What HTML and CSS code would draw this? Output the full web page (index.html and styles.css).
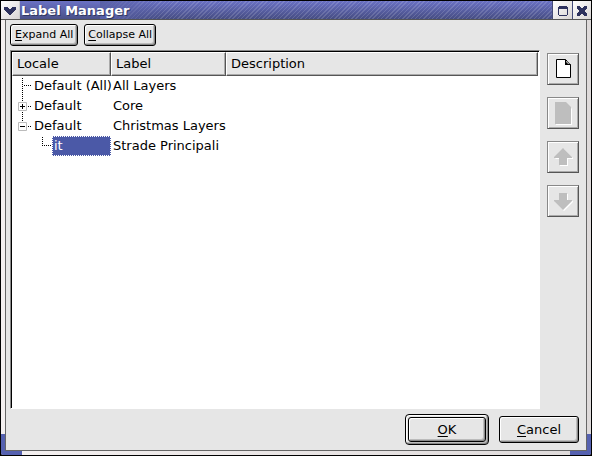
FILE: index.html
```html
<!DOCTYPE html>
<html lang="en">
<head>
<meta charset="utf-8">
<title>Label Manager</title>
<link rel="stylesheet" href="styles.css">
</head>
<body>
<main class="window">
  <header class="titlebar">
    <button class="cap" aria-label="Window menu"><svg width="14" height="14" viewBox="0 0 14 14"><path d="M1 3h4v1h1v1h2V4h1V3h4v3h-1v1h-1v1h-1v1H9v1H8v1H6v-1H5V9H4V8H3V7H2V6H1z"/></svg></button>
    <h1>Label Manager</h1>
    <button class="cap" aria-label="Maximize"><svg width="12" height="12" viewBox="0 0 12 12"><path fill-rule="evenodd" d="M2 1h8v1h1v8h-1v1H2v-1H1V2h1zM2 4v6h8V4z"/></svg></button>
    <button class="cap" aria-label="Close"><svg width="12" height="12" viewBox="0 0 12 12"><path d="M1 1h3v1h1v1h2V2h1V1h3v3h-1v1H9v2h1v1h1v3H8v-1H7V9H5v1H4v1H1V8h1V7h1V5H2V4H1z"/></svg></button>
  </header>
  <div class="content">
    <div class="toolbar">
      <button class="btn small"><span><u>E</u>xpand All</span></button>
      <button class="btn small"><span><u>C</u>ollapse All</span></button>
    </div>
    <div class="middle">
      <div class="list">
        <table>
          <colgroup><col class="c-locale"><col class="c-label"><col></colgroup>
          <thead><tr><th scope="col">Locale</th><th scope="col">Label</th><th scope="col">Description</th></tr></thead>
          <tbody>
            <tr><td><div class="node"><svg width="20" height="20"><path class="dots" d="M10.500 2V20M12 9.500H20"/></svg><span>Default (All)</span></div></td><td>All Layers</td><td></td></tr>
            <tr><td><div class="node"><svg width="20" height="20"><path class="dots" d="M10.500 0V20M16 10.500H20"/><path class="box" d="M6.500 6.500h8v8h-8z"/><path class="sign" d="M8 10.500h5M10.500 8v5"/></svg><span>Default</span></div></td><td>Core</td><td></td></tr>
            <tr><td><div class="node"><svg width="20" height="20"><path class="dots" d="M10.500 0V6M16 10.500H20"/><path class="box" d="M6.500 6.500h8v8h-8z"/><path class="sign" d="M8 10.500h5"/></svg><span>Default</span></div></td><td>Christmas Layers</td><td></td></tr>
            <tr><td><div class="node"><svg width="40" height="20"><path class="dots" d="M30.500 1V10M32 9.500H40"/></svg><span class="selected">it</span></div></td><td>Strade Principali</td><td></td></tr>
          </tbody>
        </table>
      </div>
      <div class="tools">
        <button class="tool" aria-label="New"><svg width="24" height="24" viewBox="0 0 24 24"><path fill="#fff" stroke="#000" d="M5.500 2.500h9l5 5v13h-14z"/><path d="M14 2l6 6h-6z"/><path fill="#aaa" d="M15 4h1l3 3h-2l-2-2z"/></svg></button>
        <button class="tool" aria-label="Copy" disabled><svg width="24" height="24" viewBox="0 0 24 24"><path fill="#fff" d="M5 3h11l5 5v16H5z"/><path fill="#bebebe" d="M4 1h11l5 5v17H4z"/></svg></button>
        <button class="tool" aria-label="Move up" disabled><svg width="24" height="24" viewBox="0 0 24 24"><path fill="#fff" d="M13 4l9 9v1h-5v7H9v-7H4z"/><path fill="#bebebe" d="M12 3l9 9v1h-5v7H8v-7H3v-1z"/></svg></button>
        <button class="tool" aria-label="Move down" disabled><svg width="24" height="24" viewBox="0 0 24 24"><path fill="#fff" d="M9 5h8v7h5v1l-9 9-9-9h5z"/><path fill="#bebebe" d="M8 4h8v7h5v1l-9 9-9-9v-1h5z"/></svg></button>
      </div>
    </div>
    <footer class="actions">
      <div class="default-ring"><button class="btn large"><span><u>O</u>K</span></button></div>
      <button class="btn large"><span><u>C</u>ancel</span></button>
    </footer>
  </div>
  <i class="corner left"></i><i class="corner right"></i>
</main>
</body>
</html>
```
FILE: styles.css
```css
* { box-sizing: border-box; }
body { margin: 0; background: #000; color: #000; font: 13px/20px "DejaVu Sans", sans-serif; }
button { font: inherit; color: inherit; margin: 0; padding: 0; }
svg { display: block; flex: none; }
u { text-underline-offset: 2px; text-decoration-thickness: 1px; }
.window { position: relative; min-height: 100vh; display: flex; flex-direction: column; border: 1px solid #000; border-radius: 3px; background: linear-gradient(90deg, #f4f0f0, #dedada); }
.titlebar { display: flex; height: 19px; border-bottom: 1px solid #555; background: repeating-linear-gradient(135deg, #0000 0 2px, #ffffff24 2px 3px), linear-gradient(#6a71c4, #464d83); }
.titlebar h1 { flex: 1; margin: 0; padding-left: 1px; color: #fff; font-size: 13px; line-height: 20px; text-shadow: 1px 1px #303860; background: linear-gradient(#6a71c4, #4b5289) left / 80px 100% no-repeat, linear-gradient(90deg, #5961a8 80px, #5961a800 140px); }
.cap { width: 20px; display: grid; place-items: center; border: 0; border-left: 1px solid #444a78; background: linear-gradient(135deg, #fff, #d8d4d4); padding-top: 1px; }
.cap:first-child { width: 19px; border-left: 0; border-right: 1px solid #ccc; }
.cap:last-child { width: 19px; }
.cap svg { fill: #2d315d; }
.content { flex: 1; display: flex; flex-direction: column; margin: 0 4px 4px; padding: 4px 7px 5px 4px; border: 1px solid #666; border-top: 0; background: #e6e6e6; }
.toolbar { display: flex; gap: 6px; }
.btn { border: 1px solid #000; border-radius: 3px; background: #e6e6e6; box-shadow: inset 1px 1px #fff, inset -1px -1px #888, inset -2px -2px #bbb; }
.small { height: 22px; padding: 0 3px; font-size: 11px; line-height: 20px; }
.small:first-child { padding: 0 4px; }
.large { width: 80px; height: 27px; }
.middle { flex: 1; display: flex; gap: 7px; margin-top: 4px; }
.list { flex: 1; border: 1px solid; border-color: #888 #fff #fff #888; background: #fff; box-shadow: inset 1px 1px #000; padding: 1px; }
table { width: 100%; table-layout: fixed; border-collapse: separate; border-spacing: 0; }
.c-locale { width: 99px; }
.c-label { width: 115px; }
th { height: 24px; padding: 0 0 0 4px; text-align: left; font-weight: 400; line-height: 20px; background: #e6e6e6; border: 1px solid; border-color: #fff #555 #555 #fff; box-shadow: inset -1px -1px #aaa; }
td { height: 20px; padding: 0 0 0 2px; white-space: nowrap; }
td:first-child { padding: 0; }
.node { display: flex; }
.node span { padding-left: 2px; }
.node .selected { flex: 1; height: 20px; padding-left: 1px; line-height: 18px; color: #fff; background: #4b59a7; border: 1px dotted #fff; }
.dots { fill: none; stroke: #000; stroke-dasharray: 1 1; shape-rendering: crispEdges; }
.box { fill: #fff; stroke: #bbb; }
.sign { stroke: #000; }
.tools { display: flex; flex-direction: column; gap: 12px; padding-top: 3px; }
.tool { width: 32px; height: 32px; display: grid; place-items: center; background: #e6e6e6; border: 1px solid; border-color: #888 #555 #555 #888; box-shadow: inset 1px 1px #fff, inset -1px -1px #aaa; }
.actions { display: flex; justify-content: flex-end; align-items: center; gap: 10px; margin-top: 5px; }
.default-ring { padding: 2px; border: 1px solid #000; border-radius: 4px; background: #e6e6e6; box-shadow: inset 1px 1px #fff, inset -1px -1px #888, inset -2px -2px #bbb; }
.default-ring .large { display: block; width: 78px; height: 25px; }
.corner { position: absolute; bottom: 0; width: 21px; height: 21px; border: 0 solid #5561b0; border-bottom-width: 4px; }
.left { left: 0; border-left-width: 4px; border-bottom-left-radius: 3px; }
.right { right: 0; border-right-width: 4px; border-bottom-right-radius: 3px; }
```
